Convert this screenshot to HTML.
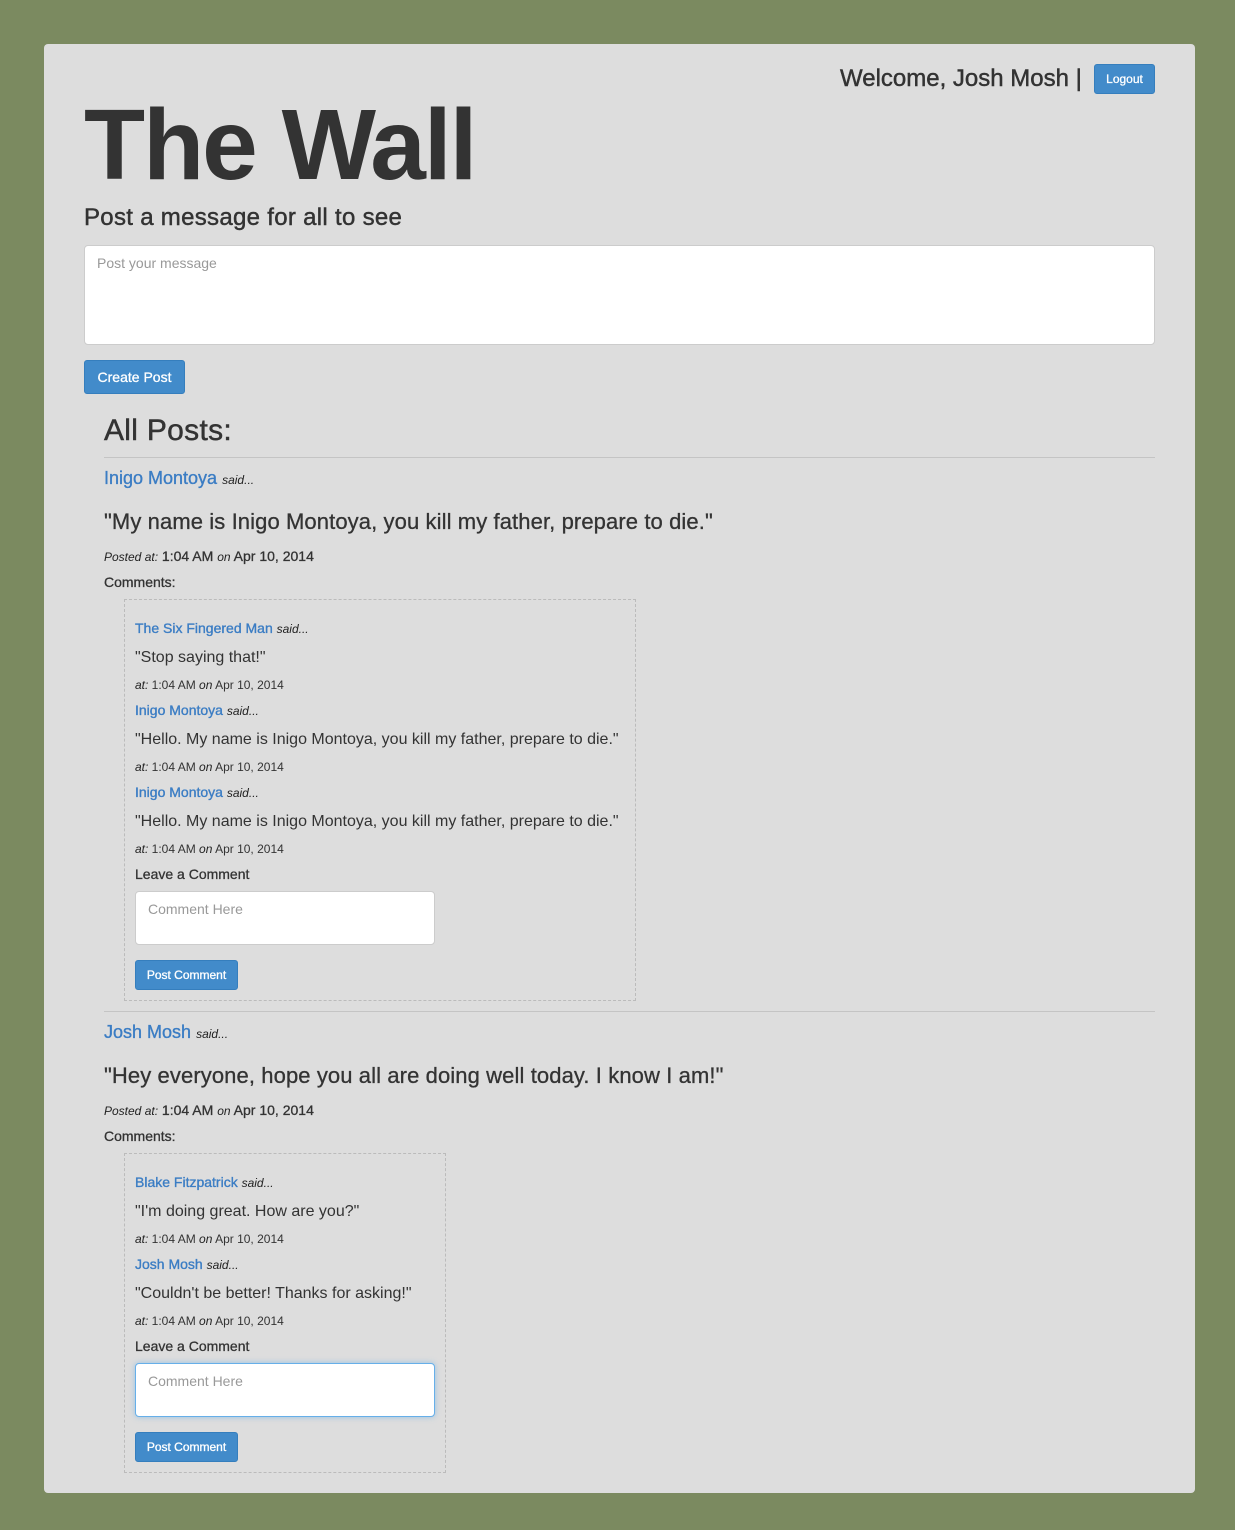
<!DOCTYPE html>
<html><head><meta charset="utf-8"><style>
*{margin:0;padding:0;box-sizing:border-box}
body{width:1235px;height:1530px;background:#7b8a60;font-family:"Liberation Sans",Arial,sans-serif;color:#333;position:relative;overflow:hidden}
.card{position:absolute;left:44px;top:44px;width:1151px;height:1449px;background:#dddddd;border-radius:4px}
.t{position:absolute;white-space:nowrap;line-height:1}
.m{-webkit-text-stroke:0.45px currentColor}
.a{color:#3b7dc4;-webkit-text-stroke:0.35px currentColor}
i{font-size:12px;color:#222;-webkit-text-stroke:0}
.btn{position:absolute;background:#428bca;border:1px solid #357ebd;border-radius:3px;color:#fff;text-align:center;-webkit-text-stroke:0.3px #fff}
.ta{position:absolute;background:#fff;border:1px solid #ccc;border-radius:4px}
.ph{position:absolute;color:#999;line-height:1;white-space:nowrap}
.hr{position:absolute;left:104px;width:1051px;height:1px;background:#c4c4c4}
.box{position:absolute;border:1px dashed #bbb}
</style></head><body>
<div class="card"></div>
<div class="t m" style="left:840px;top:67px;font-size:24px">Welcome, Josh Mosh |</div>
<div class="btn" style="left:1094px;top:64px;width:61px;height:30px;font-size:12px;line-height:28px">Logout</div>
<div class="t" style="left:84px;top:95px;font-size:100px;font-weight:bold;letter-spacing:-2px">The Wall</div>
<div class="t m" style="left:84px;top:206px;font-size:24px;letter-spacing:0.3px">Post a message for all to see</div>
<div class="ta" style="left:84px;top:245px;width:1071px;height:100px"><div class="ph" style="left:12px;top:10px;font-size:14px">Post your message</div></div>
<div class="btn" style="left:84px;top:360px;width:101px;height:34px;font-size:14px;line-height:32px">Create Post</div>
<div class="t m" style="left:104px;top:416px;font-size:30px;letter-spacing:0.3px">All Posts:</div>
<div class="hr" style="top:457px"></div>

<div class="t" style="left:104px;top:469px;font-size:18px"><span class="a">Inigo Montoya</span> <i>said...</i></div>
<div class="t m" style="left:104px;top:511px;font-size:22px;letter-spacing:0.1px;-webkit-text-stroke:0.3px #333">"My name is Inigo Montoya, you kill my father, prepare to die."</div>
<div class="t m" style="left:104px;top:549px;font-size:14px;-webkit-text-stroke:0.3px #333"><i>Posted at:</i> 1:04 AM <i>on</i> Apr 10, 2014</div>
<div class="t m" style="left:104px;top:575px;font-size:14px;-webkit-text-stroke:0.3px #333">Comments:</div>
<div class="box" style="left:124px;top:599px;width:512px;height:402px"></div>
<div class="t" style="left:135px;top:621px;font-size:14px"><span class="a">The Six Fingered Man</span> <i>said...</i></div>
<div class="t" style="left:135px;top:650px;font-size:16px">"Stop saying that!"</div>
<div class="t" style="left:135px;top:679px;font-size:12px"><i>at:</i> 1:04 AM <i>on</i> Apr 10, 2014</div>
<div class="t" style="left:135px;top:703px;font-size:14px"><span class="a">Inigo Montoya</span> <i>said...</i></div>
<div class="t" style="left:135px;top:732px;font-size:16px">"Hello. My name is Inigo Montoya, you kill my father, prepare to die."</div>
<div class="t" style="left:135px;top:761px;font-size:12px"><i>at:</i> 1:04 AM <i>on</i> Apr 10, 2014</div>
<div class="t" style="left:135px;top:785px;font-size:14px"><span class="a">Inigo Montoya</span> <i>said...</i></div>
<div class="t" style="left:135px;top:814px;font-size:16px">"Hello. My name is Inigo Montoya, you kill my father, prepare to die."</div>
<div class="t" style="left:135px;top:843px;font-size:12px"><i>at:</i> 1:04 AM <i>on</i> Apr 10, 2014</div>
<div class="t m" style="left:135px;top:867px;font-size:14px;-webkit-text-stroke:0.3px #333">Leave a Comment</div>
<div class="ta" style="left:135px;top:891px;width:300px;height:54px"><div class="ph" style="left:12px;top:10px;font-size:14px">Comment Here</div></div>
<div class="btn" style="left:135px;top:960px;width:103px;height:30px;font-size:12px;line-height:28px">Post Comment</div>
<div class="hr" style="top:1011px"></div>

<div class="t" style="left:104px;top:1023px;font-size:18px"><span class="a">Josh Mosh</span> <i>said...</i></div>
<div class="t m" style="left:104px;top:1065px;font-size:22px;letter-spacing:0.1px;-webkit-text-stroke:0.3px #333">"Hey everyone, hope you all are doing well today. I know I am!"</div>
<div class="t m" style="left:104px;top:1103px;font-size:14px;-webkit-text-stroke:0.3px #333"><i>Posted at:</i> 1:04 AM <i>on</i> Apr 10, 2014</div>
<div class="t m" style="left:104px;top:1129px;font-size:14px;-webkit-text-stroke:0.3px #333">Comments:</div>
<div class="box" style="left:124px;top:1153px;width:322px;height:320px"></div>
<div class="t" style="left:135px;top:1175px;font-size:14px"><span class="a">Blake Fitzpatrick</span> <i>said...</i></div>
<div class="t" style="left:135px;top:1204px;font-size:16px">"I'm doing great. How are you?"</div>
<div class="t" style="left:135px;top:1233px;font-size:12px"><i>at:</i> 1:04 AM <i>on</i> Apr 10, 2014</div>
<div class="t" style="left:135px;top:1257px;font-size:14px"><span class="a">Josh Mosh</span> <i>said...</i></div>
<div class="t" style="left:135px;top:1286px;font-size:16px">"Couldn't be better! Thanks for asking!"</div>
<div class="t" style="left:135px;top:1315px;font-size:12px"><i>at:</i> 1:04 AM <i>on</i> Apr 10, 2014</div>
<div class="t m" style="left:135px;top:1339px;font-size:14px;-webkit-text-stroke:0.3px #333">Leave a Comment</div>
<div class="ta" style="left:135px;top:1363px;width:300px;height:54px;border-color:#66afe9;box-shadow:0 0 6px rgba(102,175,233,.6)"><div class="ph" style="left:12px;top:10px;font-size:14px">Comment Here</div></div>
<div class="btn" style="left:135px;top:1432px;width:103px;height:30px;font-size:12px;line-height:28px">Post Comment</div>
</body></html>
